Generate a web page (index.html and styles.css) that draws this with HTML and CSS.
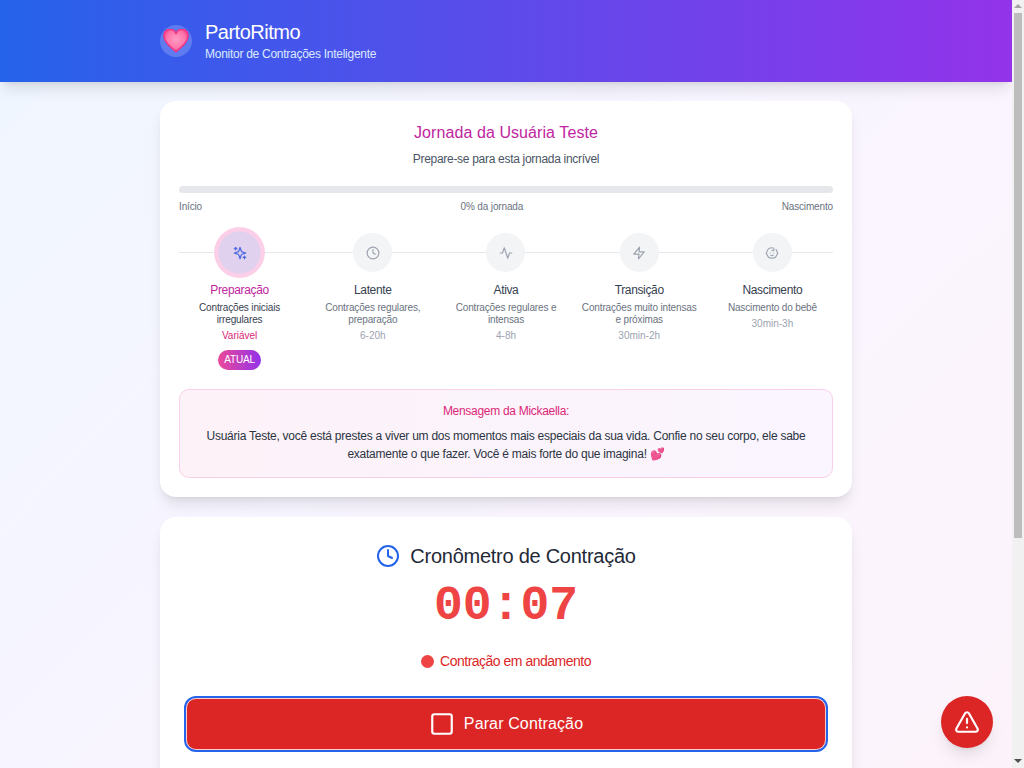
FILE: index.html
```html
<!DOCTYPE html>
<html lang="pt">
<head>
  <meta charset="UTF-8">
  <title>PartoRitmo - Monitor de Contrações Inteligente</title>
  <link rel="stylesheet" href="styles.css">
</head>
<body>

  <header class="topo">
    <div class="topo-inner">
      <div class="logo">
        <svg class="logo-coracao" viewBox="0 0 24 22">
          <defs>
            <radialGradient id="rosa" cx="50%" cy="45%" r="55%">
              <stop offset="0" stop-color="#ff9cc4"/>
              <stop offset="0.7" stop-color="#ff74ac"/>
              <stop offset="1" stop-color="#f9488e"/>
            </radialGradient>
          </defs>
          <path d="M12 21C5.500 15.500 1 11.500 1 6.800A5.600 5.600 0 0 1 12 4.600 5.600 5.600 0 0 1 23 6.800C23 11.500 18.500 15.500 12 21Z"/>
        </svg>
      </div>
      <div class="topo-texto">
        <h1>PartoRitmo</h1>
        <p>Monitor de Contrações Inteligente</p>
      </div>
    </div>
  </header>

  <main class="container">

    <section class="card jornada">
      <h2>Jornada da Usuária Teste</h2>
      <p class="sub">Prepare-se para esta jornada incrível</p>

      <div class="barra"></div>
      <div class="barra-labels">
        <span>Início</span>
        <span>0% da jornada</span>
        <span>Nascimento</span>
      </div>

      <div class="fases">
        <div class="fase atual">
          <div class="fase-circulo">
            <svg class="ico" viewBox="0 0 24 24"><path d="m12 3-1.912 5.813a2 2 0 0 1-1.275 1.275L3 12l5.813 1.912a2 2 0 0 1 1.275 1.275L12 21l1.912-5.813a2 2 0 0 1 1.275-1.275L21 12l-5.813-1.912a2 2 0 0 1-1.275-1.275L12 3Z"/><path d="M5 3v4"/><path d="M19 17v4"/><path d="M3 5h4"/><path d="M17 19h4"/></svg>
          </div>
          <h3>Preparação</h3>
          <p class="desc">Contrações iniciais irregulares</p>
          <p class="dur">Variável</p>
          <span class="selo">ATUAL</span>
        </div>
        <div class="fase">
          <div class="fase-circulo">
            <svg class="ico" viewBox="0 0 24 24"><circle cx="12" cy="12" r="10"/><polyline points="12 6 12 12 16 14"/></svg>
          </div>
          <h3>Latente</h3>
          <p class="desc">Contrações regulares, preparação</p>
          <p class="dur">6-20h</p>
        </div>
        <div class="fase">
          <div class="fase-circulo">
            <svg class="ico" viewBox="0 0 24 24"><path d="M22 12h-4l-3 9L9 3l-3 9H2"/></svg>
          </div>
          <h3>Ativa</h3>
          <p class="desc">Contrações regulares e intensas</p>
          <p class="dur">4-8h</p>
        </div>
        <div class="fase">
          <div class="fase-circulo">
            <svg class="ico" viewBox="0 0 24 24"><polygon points="13 2 3 14 12 14 11 22 21 10 12 10 13 2"/></svg>
          </div>
          <h3>Transição</h3>
          <p class="desc">Contrações muito intensas e próximas</p>
          <p class="dur">30min-2h</p>
        </div>
        <div class="fase">
          <div class="fase-circulo">
            <svg class="ico" viewBox="0 0 24 24"><path d="M9 12h.01"/><path d="M15 12h.01"/><path d="M10 16c.5.3 1.2.5 2 .5s1.5-.2 2-.5"/><path d="M19 6.3a9 9 0 0 1 1.8 3.9 2 2 0 0 1 0 3.6 9 9 0 0 1-17.6 0 2 2 0 0 1 0-3.6A9 9 0 0 1 12 3c2 0 3.5 1.1 3.5 2.5s-.9 2.5-2 2.5c-.8 0-1.5-.4-1.5-1"/></svg>
          </div>
          <h3>Nascimento</h3>
          <p class="desc">Nascimento do bebê</p>
          <p class="dur">30min-3h</p>
        </div>
      </div>

      <div class="mensagem">
        <h4>Mensagem da Mickaella:</h4>
        <p>Usuária Teste, você está prestes a viver um dos momentos mais especiais da sua vida. Confie no seu corpo, ele sabe exatamente o que fazer. Você é mais forte do que imagina! 💕</p>
      </div>
    </section>

    <section class="card cronometro">
      <h2>
        <svg class="ico-relogio" viewBox="0 0 24 24"><circle cx="12" cy="12" r="10"/><polyline points="12 6 12 12 16 14"/></svg>
        Cronômetro de Contração
      </h2>
      <div class="tempo">00:07</div>
      <div class="status"><span class="ponto"></span>Contração em andamento</div>
      <button class="btn-parar">
        <svg class="ico-parar" viewBox="0 0 24 24"><rect x="3" y="3" width="18" height="18" rx="2"/></svg>
        Parar Contração
      </button>
    </section>

  </main>

  <button class="btn-sos">
    <svg viewBox="0 0 24 24"><path d="m21.73 18-8-14a2 2 0 0 0-3.48 0l-8 14A2 2 0 0 0 4 21h16a2 2 0 0 0 1.73-3Z"/><path d="M12 9v4"/><path d="M12 17h.01"/></svg>
  </button>

  <!-- barra de rolagem da janela -->
  <div class="rolagem">
    <span class="seta-cima"></span>
    <div class="rolagem-thumb"></div>
    <span class="seta-baixo"></span>
  </div>

</body>
</html>
```

FILE: styles.css
```css
body {
  margin: 0 12px 0 0;
  font-family: "Liberation Sans", Arial, sans-serif;
  background: linear-gradient(135deg, #eff6ff, #faf5ff 50%, #fdf2f8);
  color: #1f2937;
}

h1, h2, h3, h4, p {
  margin: 0;
  font-weight: 400;
}

/* Barra de rolagem */
.rolagem {
  position: fixed;
  top: 0;
  right: 0;
  bottom: 0;
  width: 12px;
  background: #f1f1f1;
  display: flex;
  flex-direction: column;
  align-items: center;
}

.seta-cima, .seta-baixo {
  width: 0;
  height: 0;
  border-left: 4px solid transparent;
  border-right: 4px solid transparent;
}

.seta-cima {
  margin-top: 4px;
  border-bottom: 4px solid #a3a3a3;
}

.seta-baixo {
  margin-top: auto;
  margin-bottom: 5px;
  border-top: 4px solid #505050;
}

.rolagem-thumb {
  width: 8px;
  height: 525px;
  margin-top: 5px;
  background: #bdbdbd;
}

/* Topo */
.topo {
  height: 82px;
  background: linear-gradient(90deg, #2563eb, #9333ea);
  color: white;
  box-shadow: 0 10px 15px -3px rgba(0, 0, 0, 0.1), 0 4px 6px -4px rgba(0, 0, 0, 0.1);
}

.topo-inner {
  max-width: 692px;
  height: 100%;
  margin: auto;
  display: flex;
  align-items: center;
  gap: 13px;
}

.topo-texto {
  padding-bottom: 2px;
}

.logo {
  width: 32px;
  height: 32px;
  border-radius: 50%;
  background: rgba(255, 255, 255, 0.2);
  display: flex;
  align-items: center;
  justify-content: center;
}

.logo-coracao {
  width: 26px;
  height: 24px;
}

.logo-coracao path {
  fill: url(#rosa);
  stroke: #f4317f;
  stroke-width: 1.3;
}

.topo h1 {
  font-size: 20px;
  line-height: 28px;
  letter-spacing: -0.5px;
}

.topo p {
  font-size: 12px;
  line-height: 16px;
  letter-spacing: -0.27px;
  color: #dbeafe;
}

/* Cards */
.container {
  max-width: 692px;
  margin: auto;
  padding: 19px 0 32px;
  display: flex;
  flex-direction: column;
  gap: 20px;
}

.card {
  background: white;
  border-radius: 16px;
  box-shadow: 0 10px 15px -3px rgba(0, 0, 0, 0.1), 0 4px 6px -4px rgba(0, 0, 0, 0.1);
}

.jornada {
  padding: 20px 19px 19px;
}

.jornada h2 {
  font-size: 16px;
  line-height: 24px;
  letter-spacing: 0.08px;
  text-align: center;
  color: #c026a0;
}

.sub {
  font-size: 12px;
  line-height: 16px;
  letter-spacing: -0.3px;
  margin-top: 6px;
  text-align: center;
  color: #4b5563;
}

.barra {
  height: 7px;
  margin-top: 19px;
  border-radius: 4px;
  background: #e5e7eb;
}

.barra-labels {
  display: flex;
  justify-content: space-between;
  margin-top: 7px;
  font-size: 10px;
  line-height: 14px;
  letter-spacing: -0.15px;
  color: #6b7280;
}

/* Fases */
.fases {
  position: relative;
  display: grid;
  grid-template-columns: repeat(5, 1fr);
  gap: 12px;
  margin-top: 19px;
}

.fases::before {
  content: "";
  position: absolute;
  left: 0;
  right: 0;
  top: 19px;
  height: 1px;
  background: #e5e7eb;
}

.fase {
  position: relative;
  display: flex;
  flex-direction: column;
  align-items: center;
  text-align: center;
}

.fase-circulo {
  width: 39px;
  height: 39px;
  border-radius: 50%;
  background: #f3f4f6;
  display: flex;
  align-items: center;
  justify-content: center;
  color: #9ca3af;
}

.ico {
  width: 14px;
  height: 14px;
  fill: none;
  stroke: currentColor;
  stroke-width: 2;
  stroke-linecap: round;
  stroke-linejoin: round;
}

.fase h3 {
  margin-top: 10px;
  font-size: 12px;
  line-height: 16px;
  letter-spacing: -0.35px;
  color: #374151;
}

.desc {
  margin-top: 4px;
  font-size: 10px;
  line-height: 12px;
  letter-spacing: -0.15px;
  color: #6b7280;
}

.dur {
  margin-top: 3px;
  font-size: 10px;
  line-height: 14px;
  color: #9ca3af;
}

.atual .fase-circulo {
  background: #e0d2ee;
  box-shadow: 0 0 0 4px #fbcfe8;
  color: #4f6ae0;
  transform: scale(1.08);
}

.atual h3 {
  color: #c026a0;
}

.atual .desc {
  color: #374151;
}

.atual .dur {
  color: #db2777;
}

.selo {
  margin-top: 7px;
  padding: 0 6.5px;
  font-size: 10px;
  line-height: 20px;
  letter-spacing: -0.2px;
  border-radius: 10px;
  color: white;
  background: linear-gradient(90deg, #ec4899, #9333ea);
}

/* Mensagem */
.mensagem {
  margin-top: 19px;
  padding: 13px 20px 14px;
  border: 1px solid #fbcfe8;
  border-radius: 10px;
  background: linear-gradient(90deg, #fdf2f8, #faf5ff);
  text-align: center;
}

.mensagem h4 {
  font-size: 12px;
  line-height: 16px;
  letter-spacing: -0.3px;
  color: #db2777;
}

.mensagem p {
  margin-top: 8px;
  font-size: 12px;
  line-height: 18px;
  letter-spacing: -0.25px;
  color: #2b3442;
}

/* Cronometro */
.cronometro {
  height: 537px;
  padding: 25px 26px 0;
  box-sizing: border-box;
  text-align: center;
}

.cronometro h2 {
  display: flex;
  align-items: center;
  justify-content: center;
  gap: 10px;
  font-size: 20px;
  line-height: 28px;
  letter-spacing: -0.26px;
  color: #1f2937;
}

.ico-relogio {
  width: 24px;
  height: 24px;
  fill: none;
  stroke: #2563eb;
  stroke-width: 2;
  stroke-linecap: round;
  stroke-linejoin: round;
}

.tempo {
  margin-top: 12px;
  font-family: "Liberation Mono", monospace;
  font-size: 48px;
  line-height: 48px;
  font-weight: bold;
  color: #ef4444;
}

.status {
  margin-top: 21px;
  display: flex;
  align-items: center;
  justify-content: center;
  gap: 6px;
  font-size: 14px;
  line-height: 20px;
  letter-spacing: -0.5px;
  color: #dc2626;
}

.ponto {
  width: 13px;
  height: 13px;
  border-radius: 50%;
  background: #ef4444;
}

.btn-parar {
  width: 100%;
  height: 52px;
  margin-top: 27px;
  display: flex;
  align-items: center;
  justify-content: center;
  gap: 9px;
  border: 1px solid #fecaca;
  border-radius: 10px;
  outline: 2px solid #2563eb;
  outline-offset: 0;
  background: #dc2626;
  color: white;
  font-family: inherit;
  font-size: 16px;
  letter-spacing: 0.13px;
}

.ico-parar {
  width: 26px;
  height: 26px;
  fill: none;
  stroke: white;
  stroke-width: 2;
  stroke-linecap: round;
  stroke-linejoin: round;
}

/* Botao de emergencia */
.btn-sos {
  position: fixed;
  right: 31px;
  bottom: 20px;
  width: 52px;
  height: 52px;
  padding: 0;
  border: none;
  border-radius: 50%;
  background: #dc2626;
  box-shadow: 0 10px 15px -3px rgba(0, 0, 0, 0.1), 0 4px 6px -4px rgba(0, 0, 0, 0.1);
  display: flex;
  align-items: center;
  justify-content: center;
}

.btn-sos svg {
  width: 26px;
  height: 26px;
  fill: none;
  stroke: white;
  stroke-width: 2;
  stroke-linecap: round;
  stroke-linejoin: round;
}
```
